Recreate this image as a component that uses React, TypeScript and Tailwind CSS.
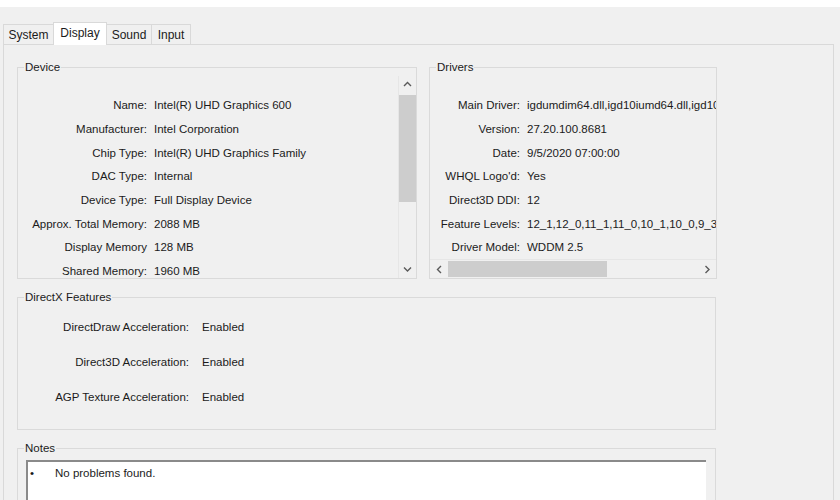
import React from "react";

const font = { fontFamily: '"Liberation Sans", Arial, sans-serif' };

function Chevron({ dir }: { dir: "up" | "down" | "left" | "right" }) {
  const pts: Record<string, string> = {
    up: "1,5 4.5,1.5 8,5",
    down: "1,1.5 4.5,5 8,1.5",
    left: "5,1 1.5,4.5 5,8",
    right: "1.5,1 5,4.5 1.5,8",
  };
  const vertical = dir === "up" || dir === "down";
  return (
    <svg
      width={vertical ? 9 : 7}
      height={vertical ? 7 : 9}
      viewBox={vertical ? "0 0 9 7" : "0 0 7 9"}
    >
      <polyline points={pts[dir]} fill="none" stroke="#5a5a5a" strokeWidth="1.4" />
    </svg>
  );
}

const deviceRows: [string, string][] = [
  ["Name:", "Intel(R) UHD Graphics 600"],
  ["Manufacturer:", "Intel Corporation"],
  ["Chip Type:", "Intel(R) UHD Graphics Family"],
  ["DAC Type:", "Internal"],
  ["Device Type:", "Full Display Device"],
  ["Approx. Total Memory:", "2088 MB"],
  ["Display Memory", "128 MB"],
  ["Shared Memory:", "1960 MB"],
];

const driverRows: [string, string][] = [
  ["Main Driver:", "igdumdim64.dll,igd10iumd64.dll,igd10iumd64.dll,igd12umd64.dll"],
  ["Version:", "27.20.100.8681"],
  ["Date:", "9/5/2020 07:00:00"],
  ["WHQL Logo'd:", "Yes"],
  ["Direct3D DDI:", "12"],
  ["Feature Levels:", "12_1,12_0,11_1,11_0,10_1,10_0,9_3,9_2,9_1"],
  ["Driver Model:", "WDDM 2.5"],
];

const dxRows: [string, string][] = [
  ["DirectDraw Acceleration:", "Enabled"],
  ["Direct3D Acceleration:", "Enabled"],
  ["AGP Texture Acceleration:", "Enabled"],
];

function Legend({ children }: { children: React.ReactNode }) {
  return (
    <legend className="ml-[6px] px-[1px] h-[14px] leading-[14px] text-[11.5px] text-[#1b1b1b]">
      {children}
    </legend>
  );
}

export default function App() {
  return (
    <div
      className="w-[840px] h-[500px] overflow-hidden bg-[#f0f0f0] flex flex-col text-[#1b1b1b]"
      style={font}
    >
      <div className="h-[7px] bg-white shrink-0" />
      {/* Tabs */}
      <div className="h-[38px] shrink-0 flex items-end pl-[3px] relative z-10">
        <div className="h-[20px] w-[50px] mb-[1px] border-t border-l border-[#d9d9d9] bg-[#f0f0f0] flex items-center justify-center text-[12px]">
          System
        </div>
        <div className="h-[23px] w-[54px] border-t border-l border-r border-[#d9d9d9] bg-white flex items-center justify-center text-[12px] pb-[2px]">
          Display
        </div>
        <div className="h-[20px] w-[45px] mb-[1px] border-t border-r border-[#d9d9d9] bg-[#f0f0f0] flex items-center justify-center text-[12px]">
          Sound
        </div>
        <div className="h-[20px] w-[39px] mb-[1px] border-t border-r border-[#d9d9d9] bg-[#f0f0f0] flex items-center justify-center text-[12px]">
          Input
        </div>
      </div>
      {/* Panel */}
      <div className="flex-1 ml-[3px] w-[831px] -mt-[1px] border-l border-t border-r border-[#d9d9d9] pl-[13px] pt-[15px]">
        <div className="flex">
          {/* Device */}
          <fieldset className="w-[400px] min-w-0 shrink-0 border border-[#dadada]">
            <Legend>Device</Legend>
            <div className="mt-[2px] h-[202px] flex">
              <div className="flex-1 pt-[18px] overflow-hidden">
                {deviceRows.map(([l, v]) => (
                  <div key={l} className="h-[23.7px] flex items-center text-[11.5px] whitespace-nowrap">
                    <div className="w-[129px] shrink-0 text-right">{l}</div>
                    <div className="pl-[7px]">{v}</div>
                  </div>
                ))}
              </div>
              <div className="w-[18px] shrink-0 flex flex-col border-l border-[#e6e6e6] bg-[#f0f0f0]">
                <div className="h-[17px] flex items-center justify-center">
                  <Chevron dir="up" />
                </div>
                <div className="mt-[2px] h-[107px] bg-[#cdcdcd]" />
                <div className="flex-1" />
                <div className="h-[17px] flex items-center justify-center">
                  <Chevron dir="down" />
                </div>
              </div>
            </div>
          </fieldset>
          {/* Drivers */}
          <fieldset className="ml-[12px] w-[288px] min-w-0 shrink-0 border border-[#dadada]">
            <Legend>Drivers</Legend>
            <div className="mt-[2px] h-[202px] w-[286px] flex flex-col overflow-hidden">
              <div className="flex-1 pt-[18px] overflow-hidden">
                {driverRows.map(([l, v]) => (
                  <div key={l} className="h-[23.7px] flex items-center text-[11.5px] whitespace-nowrap">
                    <div className="w-[90px] shrink-0 text-right">{l}</div>
                    <div className="pl-[7px]">{v}</div>
                  </div>
                ))}
              </div>
              <div className="h-[19px] shrink-0 flex items-stretch bg-[#f0f0f0] border-t border-[#e6e6e6]">
                <div className="w-[18px] flex items-center justify-center">
                  <Chevron dir="left" />
                </div>
                <div className="w-[159px] my-[1px] bg-[#cdcdcd]" />
                <div className="flex-1" />
                <div className="w-[18px] flex items-center justify-center">
                  <Chevron dir="right" />
                </div>
              </div>
            </div>
          </fieldset>
        </div>
        {/* DirectX Features */}
        <fieldset className="mt-[11px] w-[699px] min-w-0 border border-[#dadada]">
          <Legend>DirectX Features</Legend>
          <div className="pt-[6px] pb-[14px]">
            {dxRows.map(([l, v]) => (
              <div key={l} className="h-[35px] flex items-center text-[11.5px] whitespace-nowrap">
                <div className="w-[171px] text-right">{l}</div>
                <div className="pl-[13px]">{v}</div>
              </div>
            ))}
          </div>
        </fieldset>
        {/* Notes */}
        <fieldset className="mt-[11px] w-[699px] min-w-0 h-[80px] border border-[#dadada]">
          <Legend>Notes</Legend>
          <div className="mt-[5px] ml-[8px] w-[680px] h-[60px] bg-white border-t-2 border-l-2 border-t-[#8a8a8a] border-l-[#8a8a8a] pt-[3px] flex text-[11.5px]">
            <div className="w-[27px] pl-[2px]">•</div>
            <div>No problems found.</div>
          </div>
        </fieldset>
      </div>
    </div>
  );
}
